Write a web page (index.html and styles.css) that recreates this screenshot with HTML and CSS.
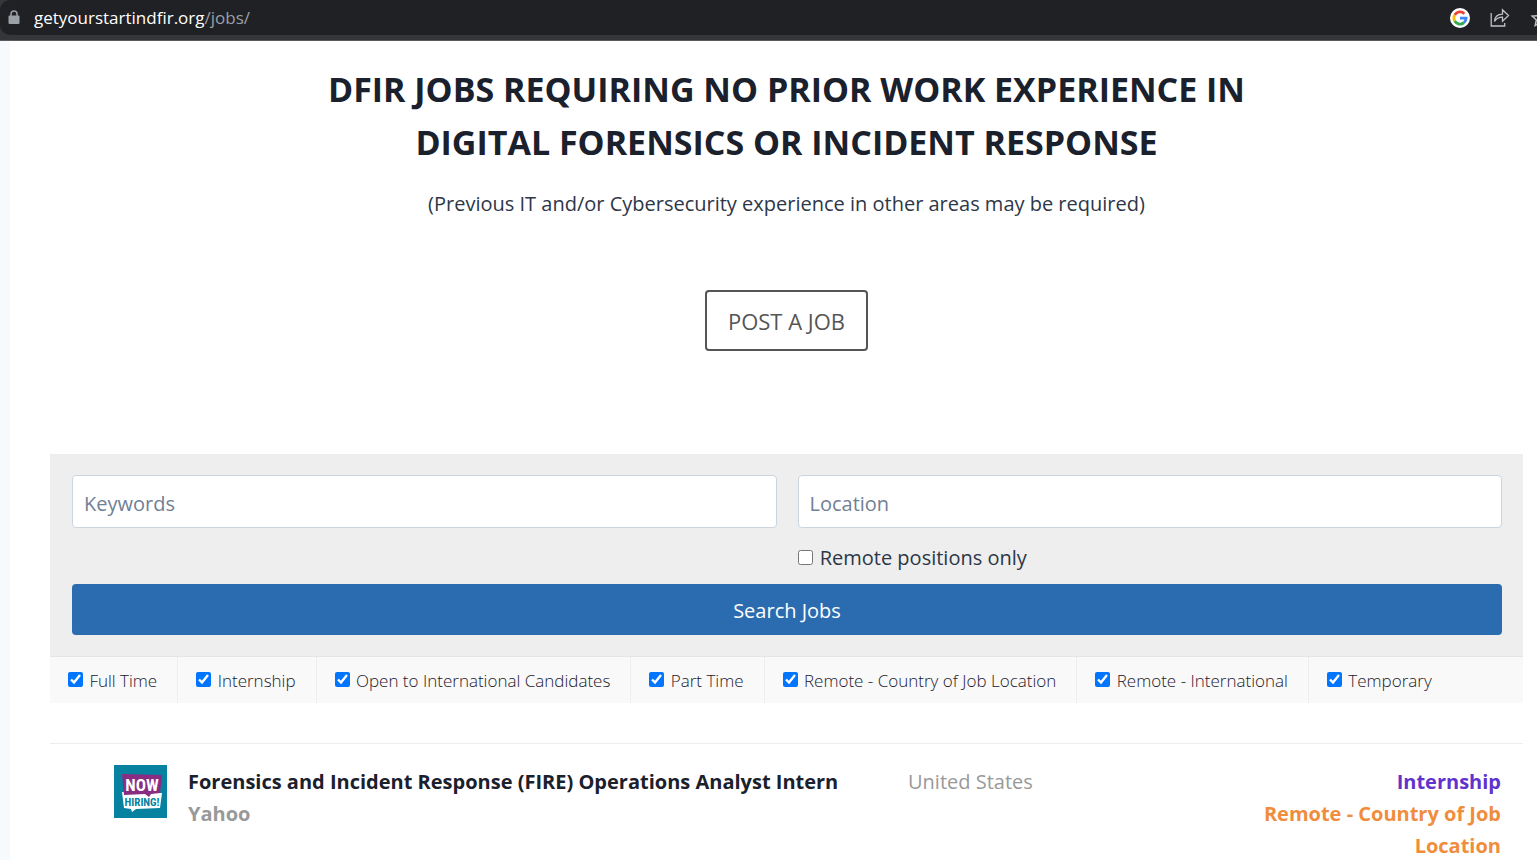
FILE: index.html
```html
<!DOCTYPE html>
<html lang="en">
  <head>
    <meta charset="utf-8">
    <title>DFIR Jobs</title>
    <link rel="stylesheet" href="styles.css">
  </head>
  <body>
    <header class="browser-bar">
      <div class="address">
        <svg class="lock" width="12" height="15" viewBox="0 0 12 15">
          <path d="M3 6V4a3 3 0 0 1 6 0v2" fill="none" stroke="#9aa0a6" stroke-width="1.5"/>
          <rect x="0.5" y="5.5" width="11" height="8.5" rx="1" fill="#9aa0a6"/>
        </svg>
        <span class="url">getyourstartindfir.org<span class="path">/jobs/</span></span>
        <svg class="google" width="20" height="20" viewBox="0 0 20 20">
          <circle cx="10" cy="10" r="10" fill="#fff"/>
          <g fill="none" stroke-width="2.8">
            <path d="M4.7 7A6.1 6.1 0 0 1 14.3 5.7" stroke="#ea4335"/>
            <path d="M4.7 13A6.1 6.1 0 0 1 4.7 7" stroke="#fbbc05"/>
            <path d="M14 14.6A6.1 6.1 0 0 1 4.7 13" stroke="#34a853"/>
            <path d="M10 10.2H16.1A6.1 6.1 0 0 1 14 14.6" stroke="#4285f4"/>
          </g>
        </svg>
        <svg class="share" width="20" height="20" viewBox="0 0 20 20" fill="none" stroke="#bdc1c6" stroke-width="1.3">
          <path d="M1.200 5v13h13.500v-3"/>
          <path d="M4.500 13.500c.3-4.800 3-7.300 8-7.300V1.800l6 5.700-6 5.700V9.200C9 9.200 6.300 10.500 4.500 13.500z"/>
        </svg>
        <svg class="star" width="20" height="20" viewBox="0 0 20 20" fill="none" stroke="#bdc1c6" stroke-width="1.5">
          <path d="M10 2.500l2.200 5.200 5.600.5-4.200 3.700 1.200 5.500-4.800-2.900-4.800 2.900 1.200-5.500-4.200-3.700 5.600-.5z"/>
        </svg>
      </div>
    </header>

    <main class="page">
      <section class="intro">
        <h1>DFIR JOBS REQUIRING NO PRIOR WORK EXPERIENCE IN DIGITAL FORENSICS OR INCIDENT RESPONSE</h1>
        <p>(Previous IT and/or Cybersecurity experience in other areas may be required)</p>
        <a class="post-job" href="#">POST A JOB</a>
      </section>

      <form class="job-filters">
        <div class="search">
          <input type="text" class="field" placeholder="Keywords" aria-label="Keywords">
          <input type="text" class="field" placeholder="Location" aria-label="Location">
          <label class="remote"><input type="checkbox"> Remote positions only</label>
          <button type="submit" class="submit">Search Jobs</button>
        </div>
        <ul class="job-types">
          <li><label><input type="checkbox" checked> Full Time</label></li>
          <li><label><input type="checkbox" checked> Internship</label></li>
          <li><label><input type="checkbox" checked> Open to International Candidates</label></li>
          <li><label><input type="checkbox" checked> Part Time</label></li>
          <li><label><input type="checkbox" checked> Remote - Country of Job Location</label></li>
          <li><label><input type="checkbox" checked> Remote - International</label></li>
          <li><label><input type="checkbox" checked> Temporary</label></li>
        </ul>
      </form>

      <ul class="listings">
        <li>
          <a class="job" href="#">
            <svg class="logo" width="53" height="53" viewBox="0 0 53 53" role="img" aria-label="Now hiring">
              <rect width="53" height="53" fill="#0781a0"/>
              <path d="M8 27l40 1-2 15-24 1-4 3-1-3-7-1z" fill="#fff"/>
              <path d="M8 9l40 1-2 18-9 1-2 3-4-3-21 1z" fill="#8b2c83"/>
              <g text-anchor="middle">
                <text class="logo-now" x="28" y="26" fill="#fff">NOW</text>
                <text class="logo-hiring" x="28" y="41" fill="#0781a0">HIRING!</text>
              </g>
            </svg>
            <div class="position">
              <h2>Forensics and Incident Response (FIRE) Operations Analyst Intern</h2>
              <div class="company">Yahoo</div>
            </div>
            <div class="location">United States</div>
            <div class="types">
              <div class="internship">Internship</div>
              <div class="remote-country">Remote - Country of Job Location</div>
            </div>
          </a>
        </li>
      </ul>
    </main>
  </body>
</html>
```
FILE: styles.css
```css
* { box-sizing: border-box; }

body {
  margin: 0;
  background: #f7fafc;
  color: #2d3748;
  font-family: "Open Sans", "Noto Sans", sans-serif;
  font-size: 20px;
  line-height: 32px;
  overflow: hidden;
}

ul { list-style: none; margin: 0; padding: 0; }
a { color: inherit; text-decoration: none; }

/* browser bar */
.browser-bar {
  height: 41px;
  padding-bottom: 6px;
  background: #35363a;
  border-bottom: 1px solid #5a5b5e;
  overflow: hidden;
}
.address {
  display: flex;
  align-items: center;
  height: 35px;
  padding-left: 8px;
  margin-right: -13px;
  border-radius: 10px;
  background: #202124;
}
.lock { flex: none; }
.url {
  flex: 1;
  margin-left: 14px;
  color: #fff;
  font-size: 17px;
}
.url .path { color: #9aa0a6; }
.google, .share { flex: none; margin-right: 20px; }
.star { flex: none; }

/* page */
.page {
  min-height: 819px;
  margin-left: 10px;
  padding: 22px 14px 0 40px;
  background: #fff;
}
.intro { text-align: center; }
.intro h1 {
  max-width: 1000px;
  margin: 0 auto;
  color: #1a202c;
  font-size: 34px;
  line-height: 53px;
  font-weight: 700;
}
.intro p { margin: 19px 0 70px; }
.post-job {
  display: inline-block;
  padding: 13px 21px 12px;
  border: 2px solid #555;
  border-radius: 4px;
  color: #555;
  font-size: 22px;
}

/* filters */
.job-filters { margin-top: 103px; }
.search {
  display: grid;
  grid-template-columns: 1fr 1fr;
  column-gap: 21px;
  padding: 21px 21px 21px 22px;
  background: #eee;
}
.field {
  width: 100%;
  height: 53px;
  padding: 4px 11px 0;
  border: 1px solid #cbd5e0;
  border-radius: 4px;
  background: #fff;
  font: inherit;
}
.field::placeholder { color: #718096; opacity: 1; }
.remote {
  grid-column: 2;
  margin: 14px 0 10px;
}
input[type=checkbox] {
  width: 15px;
  height: 15px;
  margin: 0;
  accent-color: #0075ff;
}
.remote input { margin-right: 2px; }
.submit {
  grid-column: 1 / -1;
  height: 51px;
  padding: 2px 0 0;
  border: 0;
  border-radius: 4px;
  background: #2b6cb0;
  color: #fff;
  font: inherit;
}
.job-types {
  display: flex;
  border-top: 1px solid #e5e5e5;
  background: #f9f9f9;
  color: #1a202c;
  font-size: 17px;
  font-weight: 300;
}
.job-types li {
  padding: 8px 20px 6px 18px;
  border-right: 1px solid #eee;
  white-space: nowrap;
}
.job-types li:last-child { border-right: 0; }
.job-types input { margin-right: 2px; }

/* listings */
.listings {
  margin-top: 40px;
  border-top: 1px solid #eee;
}
.job {
  display: grid;
  grid-template-columns: 53px 699px 1fr 280px;
  column-gap: 21px;
  padding: 21px 22px 21px 64px;
}
.position, .location, .types { padding-top: 1px; }
.position h2 {
  margin: 0;
  color: #1a202c;
  font-size: 20px;
  line-height: 32px;
  font-weight: 700;
}
.company { color: #999; font-weight: 700; }
.location { color: #999; }
.types { text-align: right; font-weight: 700; }
.internship { color: #6033cc; }
.remote-country { color: #f08d3c; }
.logo text {
  font-family: "Liberation Sans Narrow", "Roboto Condensed", Roboto, sans-serif;
  font-weight: 700;
}
.logo-now { font-size: 17px; }
.logo-hiring { font-size: 11px; }
```
